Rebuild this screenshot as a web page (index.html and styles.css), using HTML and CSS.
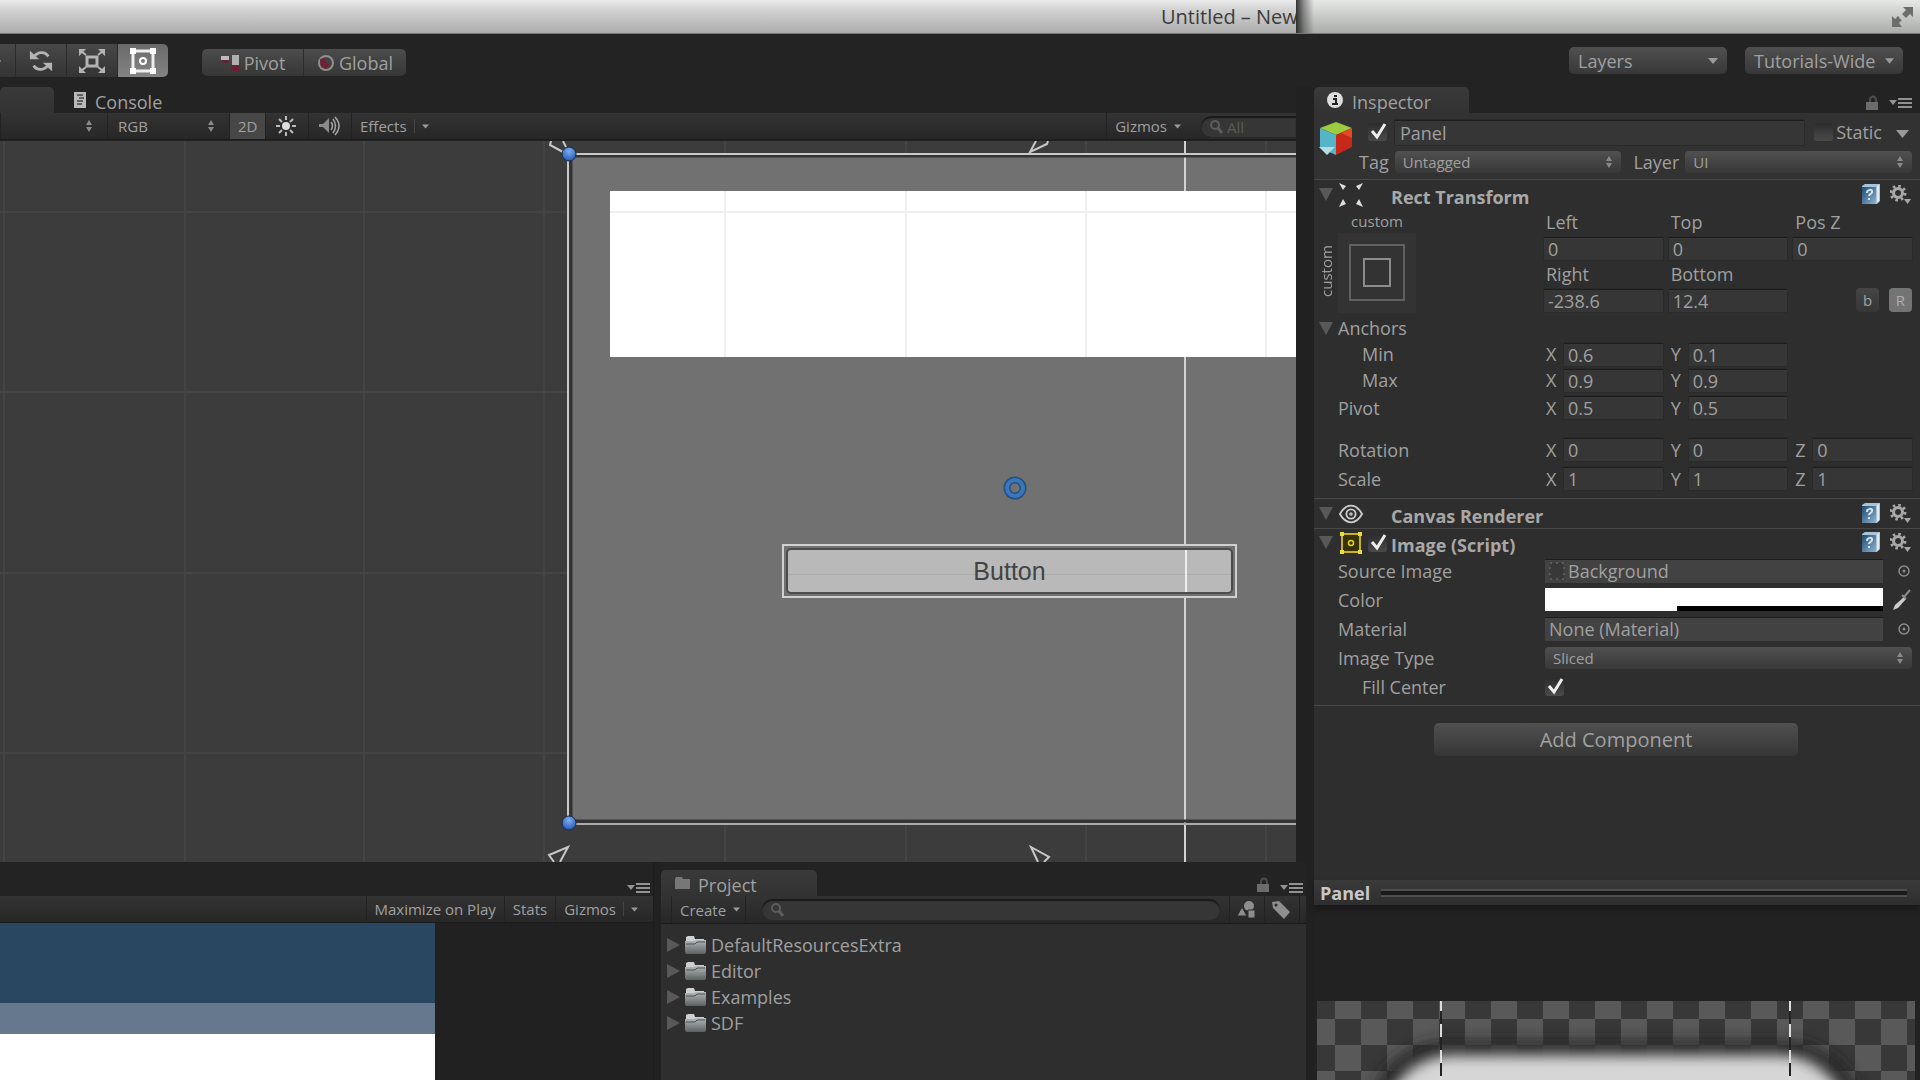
FILE: index.html
```html
<!DOCTYPE html>
<html lang="en">
<head>
    <meta charset="UTF-8">
    <meta name="viewport" content="width=device-width, initial-scale=1.0">
    <title>Untitled - New</title>
    <link rel="stylesheet" href="styles.css">
</head>
<body>
    <!-- Shared icons -->
    <svg class="defs" aria-hidden="true">
        <defs>
            <linearGradient id="bookFill" x1="0" y1="0" x2="1" y2="1">
                <stop offset="0" stop-color="#1f4a70"/>
                <stop offset="1" stop-color="#8fb4d2"/>
            </linearGradient>
            <linearGradient id="folderFill" x1="0" y1="0" x2="0" y2="1">
                <stop offset="0" stop-color="#b4b8b8"/>
                <stop offset="1" stop-color="#5c6162"/>
            </linearGradient>
            <radialGradient id="handleFill" cx="0.5" cy="0.3" r="0.7">
                <stop offset="0" stop-color="#7db0f0"/>
                <stop offset="1" stop-color="#2458b4"/>
            </radialGradient>
        </defs>
        <symbol id="updown" viewBox="0 0 8 12"><path d="M4 0l3 5H1zM4 12L1 7h6z" fill="#8a8a8a"/></symbol>
        <symbol id="down" viewBox="0 0 10 6"><path d="M0 0h10L5 6z" fill="#9a9a9a"/></symbol>
        <symbol id="fold" viewBox="0 0 14 13"><path d="M0 0h14L7 13z" fill="#585858"/></symbol>
        <symbol id="right" viewBox="0 0 13 14"><path d="M0 0l13 7L0 14z" fill="#585858"/></symbol>
        <symbol id="lock" viewBox="0 0 13 16"><path d="M4 8V5a3 3.500 0 0 1 6 0v3" fill="none" stroke="#4d4d4d" stroke-width="2"/><path d="M0 7h12v8H0z" fill="#6c6c6c"/></symbol>
        <symbol id="menu" viewBox="0 0 23 10"><path d="M0 2h8L4 7z" fill="#929292"/><path d="M9 1h14M9 5h14M9 9h14" stroke="#929292" stroke-width="2"/></symbol>
        <symbol id="book" viewBox="0 0 20 21"><path d="M1 2l3-2h15v17l-3 3H1z" fill="#a9c3d8"/><path d="M1 3h14v17H1z" fill="url(#bookFill)"/><path d="M16 2l2-1v16l-2 2z" fill="#dfe9f0"/><path d="M6 9c0-4 6-4 5-1 0 2-3 2-3 4M8 14v2" fill="none" stroke="#d5e4f0" stroke-width="2"/></symbol>
        <symbol id="gear" viewBox="0 0 22 20"><circle cx="8" cy="8" r="4.500" fill="none" stroke="#a8a8a8" stroke-width="3"/><circle cx="8" cy="8" r="7" fill="none" stroke="#a8a8a8" stroke-width="3" stroke-dasharray="2.500 3"/><path d="M14 14h7l-3.500 5z" fill="#a8a8a8"/></symbol>
        <symbol id="check" viewBox="0 0 20 20"><path d="M4 9l5 6L17 2" fill="none" stroke="#eee" stroke-width="3"/></symbol>
        <symbol id="folder" viewBox="0 0 21 18"><path d="M1 3V1l2-1h6l1 3h9v2H1z" fill="#ccd0d0"/><path d="M0 5h9l2-1h10v12l-1 2H1l-1-2z" fill="url(#folderFill)"/><path d="M1 8h9l2-2h8" fill="none" stroke="#4c5253"/></symbol>
        <symbol id="search" viewBox="0 0 14 14"><circle cx="6" cy="5" r="4" fill="none" stroke="#5c5c5c" stroke-width="2"/><path d="M9 8l4 5" stroke="#5c5c5c" stroke-width="3"/></symbol>
        <symbol id="picker" viewBox="0 0 16 16"><circle cx="8" cy="8" r="5" fill="none" stroke="#8c8c8c" stroke-width="1.500"/><circle cx="8" cy="8" r="1.500" fill="#8c8c8c"/></symbol>
    </svg>

    <header class="titlebar">
        <div class="titlebar-main"><span class="title">Untitled – New</span></div>
        <div class="titlebar-side">
            <svg width="23" height="22" viewBox="0 0 23 22"><path d="M12 1h10v10l-3-3-4 4-4-4 4-4zM1 10l3 3 3-3 4 4-3 3 3 4H1z" fill="#6c6e6c"/><path d="M9 11l3 2" stroke="#c4c6c4" stroke-width="3"/></svg>
        </div>
    </header>

    <div class="toolbar">
        <div class="tools">
            <button class="tool cut" aria-label="Move"><svg width="6" height="12"><path d="M-4 1l5 5-5 5z" fill="#aaa"/></svg></button>
            <button class="tool" aria-label="Rotate">
                <svg width="24" height="24" viewBox="0 0 26 24"><path d="M5 8c4-6 12-7 16-1M21 16c-4 6-12 7-16 1" fill="none" stroke="#b4b4b4" stroke-width="3"/><path d="M1 1v9h10zM25 23v-9H15z" fill="#b4b4b4"/></svg>
            </button>
            <button class="tool" aria-label="Scale">
                <svg width="28" height="26" viewBox="0 0 28 26"><path d="M9 9h10v9H9z" fill="none" stroke="#b4b4b4" stroke-width="3"/><path d="M3 3l5 4M25 3l-5 4M3 23l5-4M25 23l-5-4" fill="none" stroke="#b4b4b4" stroke-width="2"/><path d="M1 1h7L1 8zM27 1h-7l7 7zM1 25h7l-7-7zM27 25h-7l7-7z" fill="#b4b4b4"/></svg>
            </button>
            <button class="tool on" aria-label="Rect">
                <svg width="28" height="28" viewBox="0 0 28 28"><path d="M4 4h20v20H4z" fill="none" stroke="#eee" stroke-width="3"/><path d="M1 1h6v6H1zM21 1h6v6h-6zM1 21h6v6H1zM21 21h6v6h-6z" fill="#fff"/><circle cx="14" cy="14" r="3" fill="none" stroke="#fff" stroke-width="2"/></svg>
            </button>
        </div>
        <div class="handles">
            <button class="handle"><svg width="20" height="18" viewBox="0 0 20 18"><path d="M1 2h8v4H1z" fill="#bbb"/><path d="M2 6h7v3H2z" fill="#5d2635"/><path d="M12 1h7v10h-7z" fill="#b0b0b0"/><path d="M11 11h8v6h-8z" fill="#6a2135"/></svg>Pivot</button>
            <button class="handle"><svg width="18" height="18" viewBox="0 0 18 18"><circle cx="9" cy="9" r="7" fill="#484044" stroke="#909090" stroke-width="2"/><path d="M3 5l5-1 1 5 4 1-3 5-6-2z" fill="#702335"/></svg>Global</button>
        </div>
        <div class="drops">
            <button class="drop">Layers<svg width="10" height="6"><use href="#down"/></svg></button>
            <button class="drop">Tutorials-Wide<svg width="9" height="6"><use href="#down"/></svg></button>
        </div>
    </div>

    <div class="workspace">
        <div class="left">
            <!-- Scene view -->
            <section class="scene">
                <div class="tabs">
                    <div class="tab active scene-tab"></div>
                    <button class="tab"><svg width="13" height="16" viewBox="0 0 13 16"><path d="M0 0h12v16H0z" fill="#b8b8b8"/><path d="M3 3h6M5 6h5M3 9h6M3 12h5" stroke="#444" stroke-width="1.500"/></svg><span>Console</span></button>
                </div>
                <div class="bar">
                    <label class="mini first"><select aria-label="Draw mode"><option></option></select><svg width="8" height="12"><use href="#updown"/></svg></label>
                    <label class="mini"><select aria-label="Render mode"><option>RGB</option></select><svg width="8" height="12"><use href="#updown"/></svg></label>
                    <button class="bar-btn lit">2D</button>
                    <button class="bar-btn glyph" aria-label="Lighting"><svg width="20" height="20" viewBox="0 0 20 20"><circle cx="10" cy="10" r="4" fill="#ddd"/><path d="M10 0v4M10 16v4M0 10h4M16 10h4M3 3l3 3M14 14l3 3M17 3l-3 3M6 14l-3 3" stroke="#bbb" stroke-width="2"/></svg></button>
                    <button class="bar-btn glyph" aria-label="Audio"><svg width="22" height="20" viewBox="0 0 22 20"><path d="M0 8h4l6-6v15l-6-6H0z" fill="#8c8c8c"/><path d="M12 6q3 4 0 8M14 3q5 7 0 14M16 1q8 9 0 18" fill="none" stroke="#a5a5a5" stroke-width="1.500"/></svg></button>
                    <button class="bar-btn">Effects<i></i><svg width="7" height="5"><use href="#down"/></svg></button>
                    <button class="bar-btn push">Gizmos<svg width="7" height="5"><use href="#down"/></svg></button>
                    <label class="search scene-search"><svg width="14" height="14"><use href="#search"/></svg><input type="text" placeholder="All" aria-label="Search scene"></label>
                </div>
                <div class="canvas">
                    <svg class="wires" width="100%" height="100%">
                        <!-- world grid -->
                        <path d="M4 0v721M185 0v721M364 0v721M544 0v721M725 0v721M906 0v721M1086 0v721M1266 0v721M0 71h1296M0 251h1296M0 432h1296M0 612h1296" stroke="#444" stroke-width="2" fill="none"/>
                        <rect x="571" y="16" width="725" height="665" fill="#717171"/>
                        <rect x="610" y="50" width="690" height="166" fill="#fff"/>
                        <path d="M725 50v166M906 50v166M1086 50v166M1266 50v166M610 71h690" stroke="#efefef" stroke-width="2" fill="none"/>
                        <path d="M1185 0v50M1185 216v505" stroke="#d2d2d2" stroke-width="2"/>
                        <path d="M1296 15H571v665h725" fill="none" stroke="#333" stroke-width="3"/>
                        <path d="M568 14v669" stroke="#c8c8c8" stroke-width="2"/>
                        <path d="M569 13h727" stroke="#c8c8c8" stroke-width="2"/>
                        <path d="M569 683h727" stroke="#aaa" stroke-width="2"/>
                        <g fill="none" stroke="#c8c8c8" stroke-width="2">
                            <path d="M551 0l-1 4 13 7M563 0l3 6"/>
                            <path d="M1036 0l-6 11 17-8 1-3"/>
                            <path d="M554 721l-5-7 19-8-8 15"/>
                            <path d="M1038 721l-7-15 18 10-5 5"/>
                        </g>
                        <circle cx="569" cy="13" r="7" fill="url(#handleFill)" stroke="#1c2c48" stroke-width="1"/>
                        <circle cx="569" cy="682" r="7" fill="url(#handleFill)" stroke="#1c2c48" stroke-width="1"/>
                        <circle cx="1015" cy="347" r="8" fill="none" stroke="#245088" stroke-width="7"/>
                        <circle cx="1015" cy="347" r="8" fill="none" stroke="#3a76b8" stroke-width="4"/>
                    </svg>
                    <button class="ui-button"><span>Button</span></button>
                </div>
            </section>

            <div class="bottom">
                <!-- Game view -->
                <section class="game">
                    <div class="tabs low"><svg class="push" width="23" height="10"><use href="#menu"/></svg></div>
                    <div class="bar">
                        <button class="bar-btn push">Maximize on Play</button>
                        <button class="bar-btn">Stats</button>
                        <button class="bar-btn">Gizmos<i></i><svg width="7" height="5"><use href="#down"/></svg></button>
                    </div>
                    <div class="game-out"><div class="sky"></div><div class="band"></div><div class="ground"></div></div>
                </section>

                <!-- Project browser -->
                <section class="project">
                    <div class="tabs low">
                        <button class="tab active project-tab"><svg width="15" height="12" viewBox="0 0 15 12"><path d="M0 2l1-2h6l1 2h7v10H0z" fill="#777"/></svg><span>Project</span></button>
                        <svg class="push" width="13" height="16"><use href="#lock"/></svg>
                        <svg width="23" height="10"><use href="#menu"/></svg>
                    </div>
                    <div class="bar tall">
                        <button class="bar-btn create">Create<svg width="7" height="5"><use href="#down"/></svg></button>
                        <label class="search grow"><svg width="14" height="14"><use href="#search"/></svg><input type="text" aria-label="Search project"></label>
                        <button class="bar-btn icon" aria-label="Filter by type"><svg width="20" height="18" viewBox="0 0 20 18"><circle cx="12" cy="5" r="5" fill="#8e8e8e"/><path d="M0 15l5-9 5 9zM11 9h7v8h-7z" fill="#8e8e8e" stroke="#2a2a2a"/></svg></button>
                        <button class="bar-btn icon" aria-label="Filter by label"><svg width="18" height="18" viewBox="0 0 18 18"><path d="M0 1l7-1 11 11-6 7L1 7z" fill="#8e8e8e"/><circle cx="4" cy="4" r="1.500" fill="#2a2a2a"/></svg></button>
                        <i></i>
                    </div>
                    <ul class="tree">
                        <li><svg width="13" height="14"><use href="#right"/></svg><svg width="21" height="18"><use href="#folder"/></svg>DefaultResourcesExtra</li>
                        <li><svg width="13" height="14"><use href="#right"/></svg><svg width="21" height="18"><use href="#folder"/></svg>Editor</li>
                        <li><svg width="13" height="14"><use href="#right"/></svg><svg width="21" height="18"><use href="#folder"/></svg>Examples</li>
                        <li><svg width="13" height="14"><use href="#right"/></svg><svg width="21" height="18"><use href="#folder"/></svg>SDF</li>
                    </ul>
                </section>
            </div>
        </div>

        <!-- Inspector -->
        <aside class="inspector">
            <div class="tabs">
                <button class="tab active inspector-tab"><svg width="18" height="18" viewBox="0 0 18 18"><circle cx="9" cy="9" r="8" fill="#ddd"/><path d="M7 8h3v5M6 13h6M8 5h3" fill="none" stroke="#222" stroke-width="2"/></svg><span>Inspector</span></button>
                <svg class="push" width="13" height="16"><use href="#lock"/></svg>
                <svg width="23" height="10"><use href="#menu"/></svg>
            </div>

            <div class="object">
                <svg class="cube" width="34" height="34" viewBox="0 0 34 34"><path d="M1 6l16-6 16 6-16 7z" fill="#9ccb3f"/><path d="M1 6l16 7v20L1 26z" fill="#55b4c8"/><path d="M33 6l-16 7v20l16-8z" fill="#c8281a"/><path d="M22 11l11-5v10z" fill="#e04a22"/><path d="M0 25h16l-8 8z" fill="#b8dce4"/></svg>
                <div class="object-rows">
                    <div class="object-row">
                        <span class="box"><input type="checkbox" checked aria-label="Active"><svg width="20" height="20"><use href="#check"/></svg></span>
                        <input class="field name" type="text" value="Panel" aria-label="Name">
                        <label class="static"><span class="box"><input type="checkbox"></span>Static</label>
                        <svg class="static-arrow" width="13" height="8" viewBox="0 0 10 6"><path d="M0 0h10L5 6z" fill="#999"/></svg>
                    </div>
                    <div class="object-row second">
                        <label for="tag">Tag</label>
                        <span class="popup"><select id="tag"><option>Untagged</option></select><svg width="8" height="12"><use href="#updown"/></svg></span>
                        <label for="layer">Layer</label>
                        <span class="popup"><select id="layer"><option>UI</option></select><svg width="8" height="12"><use href="#updown"/></svg></span>
                    </div>
                </div>
            </div>

            <div class="component">
                <div class="head">
                    <svg width="14" height="13"><use href="#fold"/></svg>
                    <svg width="24" height="24" viewBox="0 0 24 24"><path d="M0 0l7 3-3 4zM24 0l-7 3 3 4zM0 24l7-3-3-5zM24 24l-7-3 3-5z" fill="#ddd"/></svg>
                    <h2>Rect Transform</h2>
                    <svg width="20" height="21"><use href="#book"/></svg>
                    <svg width="22" height="20"><use href="#gear"/></svg>
                </div>
                <div class="anchor-block">
                    <div class="anchor">
                        <span class="side">custom</span>
                        <span class="top">custom</span>
                        <button class="preset" aria-label="Anchor presets"><svg width="78" height="80"><path d="M12 12h54v55H12z" fill="none" stroke="#606060" stroke-width="2"/><path d="M26 26h26v27H26z" fill="none" stroke="#8c8c8c" stroke-width="2"/></svg></button>
                    </div>
                    <div class="offsets">
                        <label for="left">Left</label><label for="topv">Top</label><label for="posz">Pos Z</label>
                        <input class="field" id="left" value="0"><input class="field" id="topv" value="0"><input class="field" id="posz" value="0">
                        <label for="rightv">Right</label><label for="bottomv">Bottom</label><span></span>
                        <input class="field" id="rightv" value="-238.6"><input class="field" id="bottomv" value="12.4">
                        <span class="modes"><button class="mode">b</button><button class="mode on">R</button></span>
                    </div>
                </div>
                <div class="row tight anchors"><svg class="fold" width="14" height="13"><use href="#fold"/></svg><span>Anchors</span></div>
                <div class="row tight vec"><span class="indent">Min</span><label>X<input class="field" value="0.6"></label><label>Y<input class="field" value="0.1"></label></div>
                <div class="row tight vec"><span class="indent">Max</span><label>X<input class="field" value="0.9"></label><label>Y<input class="field" value="0.9"></label></div>
                <div class="row vec"><span>Pivot</span><label>X<input class="field" value="0.5"></label><label>Y<input class="field" value="0.5"></label></div>
                <div class="row vec spaced"><span>Rotation</span><label>X<input class="field" value="0"></label><label>Y<input class="field" value="0"></label><label>Z<input class="field" value="0"></label></div>
                <div class="row vec"><span>Scale</span><label>X<input class="field" value="1"></label><label>Y<input class="field" value="1"></label><label>Z<input class="field" value="1"></label></div>
            </div>

            <div class="component flat">
                <div class="head">
                    <svg width="14" height="13"><use href="#fold"/></svg>
                    <svg width="26" height="20" viewBox="0 0 26 20"><path d="M1 10Q6 1 13 1t12 9q-5 9-12 9T1 10z" fill="none" stroke="#ccc" stroke-width="2"/><circle cx="13" cy="10" r="5" fill="none" stroke="#ccc" stroke-width="2"/><circle cx="13" cy="10" r="2" fill="#bbb"/></svg>
                    <h2>Canvas Renderer</h2>
                    <svg width="20" height="21"><use href="#book"/></svg>
                    <svg width="22" height="20"><use href="#gear"/></svg>
                </div>
            </div>

            <div class="component script">
                <div class="head">
                    <svg width="14" height="13"><use href="#fold"/></svg>
                    <svg width="24" height="24" viewBox="0 0 24 24"><path d="M3 3h18v18H3z" fill="#3a3100" stroke="#c8b420" stroke-width="2"/><path d="M1 1h4v4H1zM19 1h4v4h-4zM1 19h4v4H1zM19 19h4v4h-4z" fill="#e8dc40"/><circle cx="12" cy="12" r="2.500" fill="none" stroke="#e0d030" stroke-width="1.500"/></svg>
                    <span class="box"><input type="checkbox" checked aria-label="Enabled"><svg width="20" height="20"><use href="#check"/></svg></span>
                    <h2>Image (Script)</h2>
                    <svg width="20" height="21"><use href="#book"/></svg>
                    <svg width="22" height="20"><use href="#gear"/></svg>
                </div>
                <div class="row prop"><label for="source">Source Image</label>
                    <span class="object-field"><svg width="16" height="18" viewBox="0 0 16 18"><path d="M1 1h14v16H1z" fill="#383838" stroke="#777" stroke-dasharray="2 4"/></svg><input id="source" value="Background"></span>
                    <button class="pick" aria-label="Select sprite"><svg width="16" height="16"><use href="#picker"/></svg></button></div>
                <div class="row prop"><label for="color">Color</label>
                    <span class="swatch"><input type="color" id="color" value="#ffffff"><i></i></span>
                    <button class="pick" aria-label="Pick color"><svg width="20" height="22" viewBox="0 0 20 22"><path d="M1 21l2-5 9-8 2 2-8 9z" fill="#ccc"/><path d="M10 6l4 4M12 8l6-7" stroke="#8a8a8a" stroke-width="2"/></svg></button></div>
                <div class="row prop"><label for="material">Material</label>
                    <span class="object-field"><input id="material" value="None (Material)"></span>
                    <button class="pick" aria-label="Select material"><svg width="16" height="16"><use href="#picker"/></svg></button></div>
                <div class="row prop"><label for="type">Image Type</label>
                    <span class="popup wide"><select id="type"><option>Sliced</option></select><svg width="8" height="12"><use href="#updown"/></svg></span></div>
                <div class="row prop"><label class="indent" for="fill">Fill Center</label>
                    <span class="box"><input type="checkbox" id="fill" checked><svg width="20" height="20"><use href="#check"/></svg></span></div>
            </div>

            <button class="add">Add Component</button>

            <div class="preview">
                <div class="preview-head"><h2>Panel</h2><div class="grip"></div></div>
                <svg class="sprite" width="598" height="79">
                    <defs>
                        <pattern id="checker" x="18" y="-8" width="52" height="52" patternUnits="userSpaceOnUse">
                            <path d="M0 0h52v52H0z" fill="#383838"/>
                            <path d="M0 0h26v26H0zM26 26h26v26H26z" fill="#595959"/>
                        </pattern>
                        <filter id="soft" x="-20%" y="-20%" width="140%" height="140%"><feGaussianBlur stdDeviation="7"/></filter>
                    </defs>
                    <rect width="598" height="79" fill="url(#checker)"/>
                    <rect x="50" y="40" width="498" height="300" rx="80" fill="#222" opacity="0.9" filter="url(#soft)"/>
                    <rect x="66" y="54" width="466" height="300" rx="70" fill="#d6d6d6" filter="url(#soft)"/>
                    <path d="M124 0v79M473 0v79" stroke="#222" stroke-width="2"/>
                    <path d="M124 0v79M473 0v79" stroke="#ddd" stroke-width="2" stroke-dasharray="13 13" stroke-dashoffset="3"/>
                </svg>
            </div>
        </aside>
    </div>
</body>
</html>
```
FILE: styles.css
```css
* {
    box-sizing: border-box;
}
body {
    margin: 0;
    height: 100vh;
    display: flex;
    flex-direction: column;
    overflow: hidden;
    background: #232323;
    color: #a0a0a0;
    font-family: "Open Sans", "Noto Sans", sans-serif;
    font-size: 18px;
    line-height: 24px;
}
button, input, select {
    font: inherit;
    color: inherit;
    margin: 0;
    padding: 0;
    border: 0;
    background: none;
    border-radius: 0;
    outline: 0;
}
select, input[type="checkbox"] {
    appearance: none;
}
svg {
    display: block;
    flex: none;
}
h2 {
    margin: 0;
    font-size: 18px;
    font-weight: 700;
    color: #a8a8a8;
}
.defs {
    position: absolute;
    width: 0;
    height: 0;
}
.push {
    margin-left: auto;
}

/* Window title */
.titlebar {
    display: flex;
    height: 34px;
    flex: none;
    border-bottom: 1px solid #777;
}
.titlebar-main {
    flex: 1;
    display: flex;
    justify-content: flex-end;
    align-items: center;
    background: linear-gradient(#ececec, #d2d2d2 30%, #adadad);
}
.title {
    width: 135px;
    overflow: hidden;
    white-space: nowrap;
    font-size: 20px;
    color: #3c3c3c;
}
.titlebar-side {
    width: 624px;
    display: flex;
    justify-content: flex-end;
    align-items: center;
    padding-right: 6px;
    background: linear-gradient(90deg, rgba(30, 30, 30, 0.9), rgba(60, 60, 60, 0.5) 8px, rgba(90, 90, 90, 0) 18px), linear-gradient(#e6e8e6, #d4d6d4 30%, #a9aca9);
}

/* Main toolbar */
.toolbar {
    display: flex;
    align-items: center;
    height: 53px;
    flex: none;
    padding: 0 17px 0 0;
}
.tools {
    display: flex;
    height: 33px;
    margin-right: 34px;
    border-radius: 0 5px 5px 0;
    overflow: hidden;
}
.tool {
    width: 51px;
    display: flex;
    align-items: center;
    justify-content: center;
    background: linear-gradient(#484848, #343434);
    border-right: 1px solid #2a2a2a;
}
.tool.cut {
    width: 16px;
    justify-content: flex-start;
}
.tool.on {
    width: 50px;
    background: linear-gradient(#6a6a6a, #848484);
    border-right: 0;
}
.handles {
    display: flex;
    margin-top: 4px;
}
.handle {
    width: 102px;
    height: 27px;
    display: flex;
    align-items: center;
    justify-content: center;
    gap: 4px;
    background: linear-gradient(#4c4c4c, #363636);
    border-radius: 5px 0 0 5px;
    border-right: 1px solid #2c2c2c;
}
.handle + .handle {
    border-right: 0;
    border-radius: 0 5px 5px 0;
}
.drops {
    display: flex;
    gap: 18px;
    margin-left: auto;
}
.drop {
    width: 158px;
    height: 27px;
    padding: 0 9px;
    display: flex;
    align-items: center;
    justify-content: space-between;
    white-space: nowrap;
    background: linear-gradient(#505050, #383838);
    border-radius: 5px;
}

/* Panels */
.workspace {
    flex: 1;
    min-height: 0;
    display: flex;
}
.left {
    flex: 1;
    min-width: 0;
    display: flex;
    flex-direction: column;
    background: #212121;
}
.tabs {
    height: 26px;
    flex: none;
    display: flex;
    align-items: center;
    gap: 10px;
    padding: 0 8px 0 0;
    background: #232323;
}
.tabs .push, .tabs .push + svg {
    margin-top: 5px;
}
.tabs.low {
    height: 34px;
    align-items: flex-end;
    padding: 0 3px 3px 0;
}
.tab {
    height: 26px;
    display: flex;
    align-items: center;
    gap: 8px;
    padding: 0 20px;
}
.tab span {
    padding-top: 4px;
}
.tab.active {
    background: linear-gradient(#3a3a3a, #323232);
    border-radius: 5px 5px 0 0;
}
.tabs.low .tab {
    margin-bottom: -3px;
}
.scene-tab {
    width: 54px;
    margin-right: -10px;
}
.inspector-tab {
    width: 155px;
    padding: 0 12px;
}
.project-tab {
    width: 156px;
    padding: 0 14px;
}
.bar {
    height: 27px;
    flex: none;
    display: flex;
    align-items: stretch;
    background: linear-gradient(#333, #272727);
    border-bottom: 1px solid #1c1c1c;
    font-size: 15px;
}
.bar i {
    width: 1px;
    background: #1e1e1e;
}
.bar-btn {
    display: flex;
    align-items: center;
    gap: 7px;
    padding: 0 8px;
    border-left: 1px solid #222;
    white-space: nowrap;
}
.bar-btn i {
    height: 14px;
    background: #444;
}
.bar-btn.lit {
    width: 36px;
    background: #474747;
}
.bar-btn.glyph {
    width: 43px;
    padding: 0 10px;
}
.bar-btn.icon {
    width: 35px;
    padding: 0 7px;
}
.mini {
    width: 122px;
    display: flex;
    align-items: center;
    padding: 0 14px 0 10px;
    border-left: 1px solid #222;
}
.mini.first {
    width: 107px;
}
.mini select {
    flex: 1;
    min-width: 0;
}
.search {
    display: flex;
    align-items: center;
    gap: 4px;
    height: 21px;
    margin: 3px 9px 0 16px;
    padding-left: 8px;
    background: #363636;
    border-radius: 11px;
    box-shadow: inset 0 2px 1px #191919;
}
.search input {
    flex: 1;
    min-width: 0;
}
.search input::placeholder {
    color: #5a5a5a;
}
.scene-search {
    width: 95px;
    margin: 3px 0 0 12px;
    border-radius: 11px 0 0 11px;
}
.grow {
    flex: 1;
}

/* Scene */
.scene {
    flex: 1;
    min-height: 0;
    display: flex;
    flex-direction: column;
    margin-right: 18px;
}
.canvas {
    position: relative;
    flex: 1;
    min-height: 0;
    margin-top: 1px;
    background: #3c3c3c;
    overflow: hidden;
}
.wires {
    position: absolute;
    left: 0;
    top: 0;
}
.ui-button {
    position: absolute;
    left: 782px;
    top: 403px;
    width: 455px;
    height: 54px;
    padding: 2px;
    border: 2px solid #d0d0d0;
    background: #717171;
    font-family: "Liberation Sans", Arial, sans-serif;
    font-size: 25px;
    color: #444;
}
.ui-button span {
    display: flex;
    align-items: center;
    justify-content: center;
    height: 100%;
    border: 2px solid #4c4c4c;
    border-radius: 5px;
    background: linear-gradient(90deg, transparent 397px, #eee 397px, #eee 399px, transparent 399px), linear-gradient(transparent 24px, #adadad 24px, #adadad 25px, transparent 25px), #b9b9b9;
}

/* Game and project */
.bottom {
    display: flex;
    gap: 7px;
    height: 218px;
    flex: none;
    padding-right: 8px;
}
.game, .project {
    display: flex;
    flex-direction: column;
}
.game {
    flex: 1;
    min-width: 0;
    border-right: 1px solid #1c1c1c;
}
.game .bar {
    padding-right: 7px;
}
.game-out {
    width: 435px;
    flex: 1;
    display: flex;
    flex-direction: column;
}
.sky {
    height: 80px;
    background: #2a4762;
}
.band {
    height: 31px;
    background: #65788d;
}
.ground {
    flex: 1;
    background: #fff;
}
.project {
    width: 645px;
    background: #2e2e2e;
}
.bar.tall {
    height: 28px;
    padding-right: 6px;
}
.bar.tall .bar-btn:first-child {
    margin-left: 10px;
}
.create {
    width: 75px;
    border-right: 1px solid #222;
}
.tree {
    margin: 0;
    padding: 8px 6px;
    list-style: none;
}
.tree li {
    display: flex;
    align-items: center;
    height: 26px;
}
.tree svg {
    margin-right: 5px;
}

/* Inspector */
.inspector {
    width: 606px;
    flex: none;
    display: flex;
    flex-direction: column;
    background: #2e2e2e;
}
.field {
    min-width: 0;
    width: 100%;
    height: 23px;
    padding: 0 4px;
    background: #363636;
    border-top: 1px solid #1d1d1d;
    box-shadow: 0 0 0 1px #2a2a2a;
}
.popup {
    flex: 1;
    height: 22px;
    display: flex;
    align-items: center;
    padding: 0 8px;
    background: linear-gradient(#505050, #383838);
    border-radius: 4px;
    font-size: 15px;
}
.popup select {
    flex: 1;
    min-width: 0;
}
.box {
    position: relative;
    display: block;
    width: 20px;
    height: 20px;
    flex: none;
}
.box input {
    display: block;
    width: 19px;
    height: 18px;
    margin-top: 1px;
    border-radius: 3px;
    background: linear-gradient(#2c2c2c, #4a4a4a);
}
.box svg {
    position: absolute;
    left: 0;
    top: 0;
    pointer-events: none;
}
.object {
    display: flex;
    gap: 6px;
    height: 67px;
    padding: 5px 8px 0 5px;
    border-bottom: 1px solid #484848;
    background: #323232;
}
.cube {
    margin-top: 4px;
}
.object-rows {
    flex: 1;
}
.object-row {
    display: flex;
    align-items: center;
    height: 28px;
    padding-left: 9px;
}
.object-row.second {
    gap: 6px;
    height: 32px;
    padding-left: 0;
}
.second .popup {
    margin-right: 6px;
}
.second .popup:last-child {
    margin-right: 0;
}
.name {
    flex: 1;
    height: 25px;
    margin: 0 10px 0 7px;
    padding: 0 5px;
}
.static {
    display: flex;
    align-items: center;
    gap: 2px;
}
.static-arrow {
    margin: 4px 3px 0 14px;
}
.component {
    padding: 0 8px 5px 24px;
    border-bottom: 1px solid #484848;
}
.component.flat {
    padding-bottom: 0;
}
.component.script {
    padding-bottom: 4px;
}
.head {
    display: flex;
    align-items: center;
    height: 29px;
    margin: 0 0 0 -19px;
}
.script .head {
    height: 27px;
}
.head svg {
    width: 24px;
    margin-right: 4px;
}
.head > svg:first-child {
    width: 14px;
    margin-right: 6px;
}
.head h2 {
    flex: 1;
    padding: 4px 0 0 24px;
}
.head .box {
    margin-left: 1px;
}
.head .box svg {
    width: 20px;
}
.head .box + h2 {
    padding-left: 3px;
}
.head h2 + svg {
    width: 20px;
    margin-right: 9px;
}
.head h2 + svg + svg {
    width: 22px;
    margin-right: 0;
}
.anchor-block {
    display: flex;
    justify-content: space-between;
}
.anchor {
    position: relative;
    width: 78px;
    font-size: 15px;
    text-align: center;
}
.top {
    display: block;
    height: 24px;
}
.side {
    position: absolute;
    left: -24px;
    top: 22px;
    height: 80px;
    writing-mode: vertical-rl;
    transform: rotate(180deg);
}
.preset {
    display: block;
    background: #333;
}
.offsets {
    width: 368px;
    display: grid;
    grid-template-columns: 1fr 1fr 1fr;
    grid-auto-rows: 26px;
    column-gap: 6px;
    align-items: center;
}
.offsets label {
    padding-left: 2px;
}
.modes {
    display: flex;
    justify-content: flex-end;
    gap: 10px;
}
.mode {
    width: 23px;
    height: 24px;
    border-radius: 4px;
    background: linear-gradient(#454545, #363636);
    font-size: 15px;
}
.mode.on {
    background: #747474;
    color: #b0b0b0;
}
.row {
    display: grid;
    align-items: center;
    height: 29px;
}
.row.tight {
    height: 26px;
}
.row.anchors {
    margin-top: 2px;
    display: flex;
}
.fold {
    margin: 0 5px 0 -19px;
}
.row.spaced {
    margin-top: 13px;
}
.indent {
    padding-left: 24px;
}
.vec {
    grid-template-columns: 200px 1fr 1fr 1fr;
    column-gap: 6px;
}
.vec label {
    display: grid;
    grid-template-columns: 18px 1fr;
    align-items: center;
    padding-left: 2px;
}
.prop {
    grid-template-columns: 207px 1fr 29px;
}
.popup.wide {
    grid-column: 2 / 4;
}
.object-field {
    display: flex;
    align-items: center;
    gap: 3px;
    height: 24px;
    padding: 0 4px;
    background: #424242;
    border-top: 1px solid #1d1d1d;
}
.object-field input {
    flex: 1;
    min-width: 0;
}
.pick {
    display: flex;
    justify-content: flex-end;
}
.swatch {
    position: relative;
    height: 23px;
}
.swatch input {
    display: block;
    width: 100%;
    height: 23px;
}
.swatch input::-webkit-color-swatch-wrapper {
    padding: 0;
}
.swatch input::-webkit-color-swatch {
    border: 0;
}
.swatch i {
    position: absolute;
    right: 0;
    bottom: 0;
    width: 61%;
    height: 5px;
    background: #000;
}
.add {
    width: 364px;
    height: 33px;
    margin: 17px 0 0 120px;
    flex: none;
    border-radius: 5px;
    background: linear-gradient(#505050, #363636);
    font-size: 20px;
}

/* Preview */
.preview {
    margin-top: auto;
    height: 200px;
    display: flex;
    flex-direction: column;
    justify-content: space-between;
    background: #222;
}
.preview-head {
    display: flex;
    align-items: center;
    gap: 11px;
    height: 25px;
    padding: 0 13px 0 6px;
    background: linear-gradient(#3a3a3a, #2e2e2e);
    box-shadow: 0 4px 5px #181818;
}
.preview-head h2 {
    color: #c8c8c8;
}
.grip {
    flex: 1;
    height: 8px;
    border: solid #4e4e4e;
    border-width: 2px 0;
    background: #1a1a1a;
}
.sprite {
    margin-left: 3px;
}
```
